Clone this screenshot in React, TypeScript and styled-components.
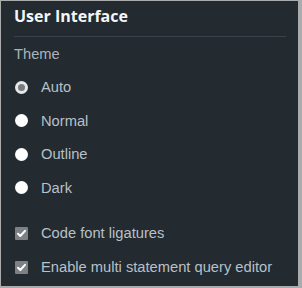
import React from "react";
import styled, { createGlobalStyle } from "styled-components";

const Global = createGlobalStyle`
  html, body { margin: 0; padding: 0; background: #a9abad; }
  body { width: 302px; height: 288px; overflow: hidden; }
`;

const Panel = styled.div`
  box-sizing: border-box;
  width: 297px;
  height: 285px;
  margin: 1px 0 0 1px;
  background: #232a30;
  padding: 0 12px 0 13px;
  font-family: "Liberation Sans", Arial, sans-serif;
`;

const Title = styled.h2`
  margin: 0 0 8px;
  padding-top: 4px;
  height: 36px;
  box-sizing: border-box;
  font-family: "Open Sans", sans-serif;
  font-weight: 700;
  font-size: 16px;
  line-height: 22px;
  color: #f4f6f8;
  border-bottom: 1px solid #3a4148;
`;

const Section = styled.div`
  font-size: 14.7px;
  line-height: 18px;
  color: #aab3bd;
  margin-bottom: 15px;
`;

const Row = styled.label<{ $gap?: number }>`
  display: flex;
  align-items: center;
  height: 18px;
  margin-bottom: ${(p) => p.$gap ?? 15.5}px;
  font-size: 14.7px;
  color: #b8c0c9;
  gap: 13px;
`;

const Radio = styled.span<{ $checked?: boolean }>`
  box-sizing: border-box;
  width: 13px;
  height: 13px;
  border-radius: 50%;
  margin-left: 1px;
  background: ${(p) => (p.$checked ? "#777b7f" : "#ffffff")};
  border: ${(p) => (p.$checked ? "3px solid #e6e8ea" : "none")};
  flex: none;
`;

const Check = styled.span`
  width: 13px;
  height: 13px;
  margin-left: 1px;
  background: #7d8185;
  border-radius: 1px;
  display: flex;
  align-items: center;
  justify-content: center;
  flex: none;
`;

const Group = styled.div``;

const CheckIcon = () => (
  <svg width="11" height="11" viewBox="0 0 11 11">
    <path d="M2 5.8 L4.3 8 L9 2.8" stroke="#fff" strokeWidth="2" fill="none" strokeLinecap="round" strokeLinejoin="round" />
  </svg>
);

const themes = ["Auto", "Normal", "Outline", "Dark"];

export default function App() {
  return (
    <>
      <Global />
      <Panel>
        <Title>User Interface</Title>
        <Section>Theme</Section>
        <Group>
          {themes.map((t, i) => (
            <Row key={t} $gap={i === 3 ? 27.5 : 15.5}>
              <Radio $checked={i === 0} />
              {t}
            </Row>
          ))}
        </Group>
        <Group>
          <Row $gap={16}>
            <Check><CheckIcon /></Check>
            Code font ligatures
          </Row>
          <Row $gap={0}>
            <Check><CheckIcon /></Check>
            Enable multi statement query editor
          </Row>
        </Group>
      </Panel>
    </>
  );
}
